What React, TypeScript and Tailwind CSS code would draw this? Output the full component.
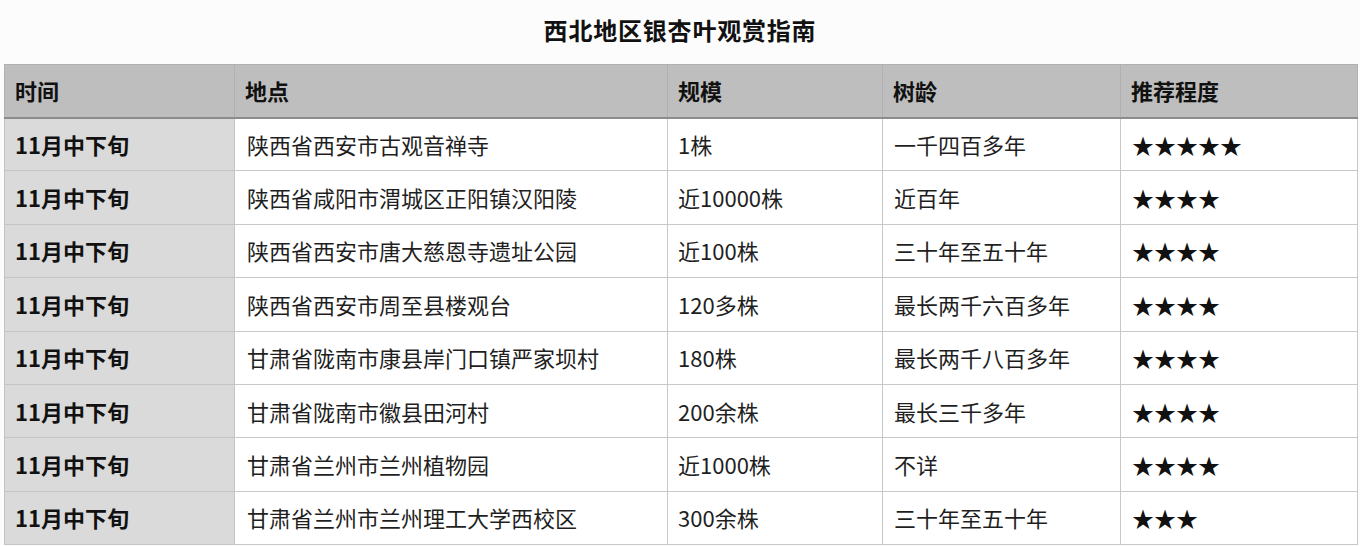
const rows: [string, string, string, string, number][] = [
  ["11月中下旬", "陕西省西安市古观音禅寺", "1株", "一千四百多年", 5],
  ["11月中下旬", "陕西省咸阳市渭城区正阳镇汉阳陵", "近10000株", "近百年", 4],
  ["11月中下旬", "陕西省西安市唐大慈恩寺遗址公园", "近100株", "三十年至五十年", 4],
  ["11月中下旬", "陕西省西安市周至县楼观台", "120多株", "最长两千六百多年", 4],
  ["11月中下旬", "甘肃省陇南市康县岸门口镇严家坝村", "180株", "最长两千八百多年", 4],
  ["11月中下旬", "甘肃省陇南市徽县田河村", "200余株", "最长三千多年", 4],
  ["11月中下旬", "甘肃省兰州市兰州植物园", "近1000株", "不详", 4],
  ["11月中下旬", "甘肃省兰州市兰州理工大学西校区", "300余株", "三十年至五十年", 3],
];

const headers = ["时间", "地点", "规模", "树龄", "推荐程度"];

export default function App() {
  return (
    <div
      className="w-[1360px] h-[546px] bg-[#fcfcfc] overflow-hidden text-[#1f1f1f]"
      style={{ fontFamily: '"Noto Sans CJK SC", "Noto Sans", sans-serif' }}
    >
      <h1 className="h-[64px] pt-[14px] text-center text-[24px] leading-[32px] font-bold tracking-[0.8px] text-[#111]">
        西北地区银杏叶观赏指南
      </h1>
      <table className="ml-[4px] w-[1353px] table-fixed border-collapse">
        <colgroup>
          <col className="w-[230px]" />
          <col className="w-[433px]" />
          <col className="w-[215px]" />
          <col className="w-[238px]" />
          <col className="w-[237px]" />
        </colgroup>
        <thead>
          <tr className="h-[53px] bg-[#bebebe]">
            {headers.map((h) => (
              <th
                key={h}
                className="border border-[#b0b0b0] border-b-2 border-b-[#8c8c8c] px-[10px] text-left text-[22px] font-bold text-[#111]"
              >
                {h}
              </th>
            ))}
          </tr>
        </thead>
        <tbody>
          {rows.map(([time, place, scale, age, stars], i) => (
            <tr key={i} className="h-[53.4px]">
              <td className="border border-[#c4c4c4] bg-[#dadada] px-[10px] text-[22px] font-bold text-[#111]">
                {time}
              </td>
              <td className="border border-[#c8c8c8] bg-white px-[12px] text-[22px]">
                {place}
              </td>
              <td className="border border-[#c8c8c8] bg-white px-[10px] text-[22px]">
                {scale}
              </td>
              <td className="border border-[#c8c8c8] bg-white px-[11px] text-[22px]">
                {age}
              </td>
              <td className="border border-[#c8c8c8] bg-white px-[11px] text-[22px] text-[#111]">
                {"★".repeat(stars)}
              </td>
            </tr>
          ))}
        </tbody>
      </table>
    </div>
  );
}
